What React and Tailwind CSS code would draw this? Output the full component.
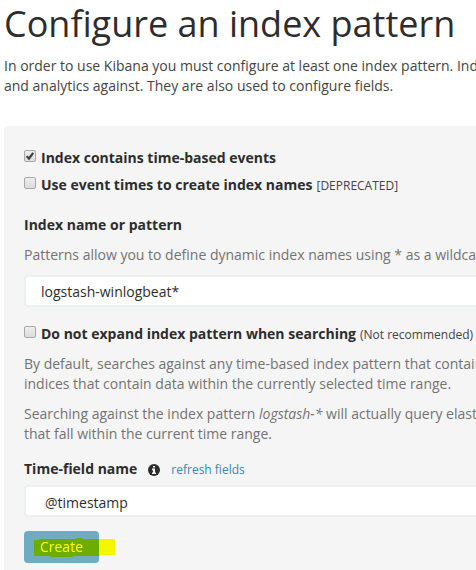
import React from "react";

function Tickbox({ id, label, note, noteClass, defaultChecked }) {
  return (
    <div className="flex h-5 items-center whitespace-nowrap">
      <span className="mr-[5px] grid h-5 shrink-0 items-start pt-0.5">
        <input
          id={id}
          type="checkbox"
          defaultChecked={defaultChecked}
          className="peer col-start-1 row-start-1 m-0 h-3 w-3 appearance-none rounded-[2px] border border-[#a9a9a9] bg-linear-to-b from-[#eeeeee] to-[#dcdcdc]"
        />
        <svg
          viewBox="0 0 12 12"
          className="pointer-events-none invisible col-start-1 row-start-1 h-3 w-3 peer-checked:visible"
          aria-hidden="true"
        >
          <path d="M2.6 6.2 L5 8.5 L9.2 2.8" fill="none" stroke="#404040" strokeWidth="2.2" />
        </svg>
      </span>
      <label htmlFor={id} className="flex items-baseline gap-1">
        <span className="font-bold">{label}</span>
        {note && <small className={noteClass}>{note}</small>}
      </label>
    </div>
  );
}

function InfoIcon() {
  return (
    <svg viewBox="0 0 12 12" className="h-3 w-3" aria-hidden="true">
      <circle cx="6" cy="6" r="6" fill="#2d2d2d" />
      <path d="M5 2h2v1.6H5z M4 4.600h3v3.800h1V10H4V8.400h1V6.200H4z" fill="#f5f5f5" />
    </svg>
  );
}

function Marker() {
  return (
    <svg
      viewBox="0 0 81 19"
      className="pointer-events-none absolute top-[7px] left-[10px] h-[19px] w-[81px] mix-blend-multiply"
      aria-hidden="true"
    >
      <path
        d="M0 2H5V1H42V0H48V1H81V17H66V18H39V19H16V18H0Z"
        fill="#ffff00"
        shapeRendering="crispEdges"
      />
    </svg>
  );
}

export default function App() {
  return (
    <main className="flex min-h-screen flex-col overflow-hidden bg-white pl-1 font-['Open_Sans','Noto_Sans',sans-serif] text-sm leading-5 text-[#2d2d2d]">
      <h1 className="pt-1 text-4xl leading-10 whitespace-nowrap">Configure an index pattern</h1>
      <p className="mt-3 whitespace-nowrap text-[#444444]">
        In order to use Kibana you must configure at least one index pattern. Ind
        <br />
        and analytics against. They are also used to configure fields.
      </p>

      <form
        className="mt-[30px] grow rounded-tl bg-[#f5f5f5] pt-[22px] pb-[7px] pl-5"
        onSubmit={(e) => e.preventDefault()}
      >
        <div className="flex flex-col gap-[7px]">
          <Tickbox id="time-based" label="Index contains time-based events" defaultChecked />
          <Tickbox
            id="event-times"
            label="Use event times to create index names"
            note="[DEPRECATED]"
            noteClass="text-xs text-[#444444]"
          />
        </div>

        <label htmlFor="index-name" className="mt-5 block font-bold">
          Index name or pattern
        </label>
        <p className="mt-[10px] whitespace-nowrap text-[#737373]">
          Patterns allow you to define dynamic index names using * as a wildca
        </p>
        <input
          id="index-name"
          type="text"
          defaultValue="logstash-winlogbeat*"
          className="mt-[10px] block h-8 w-full rounded-l border-2 border-r-0 border-[#ecf0f1] bg-white px-[15px]"
        />

        <div className="mt-[17px]">
          <Tickbox
            id="no-expand"
            label="Do not expand index pattern when searching"
            note="(Not recommended)"
            noteClass="text-xs text-[#444444]"
          />
        </div>
        <p className="mt-[10px] whitespace-nowrap text-[#737373]">
          By default, searches against any time-based index pattern that contain
          <br />
          indices that contain data within the currently selected time range.
        </p>
        <p className="mt-[10px] whitespace-nowrap text-[#737373]">
          Searching against the index pattern <i>logstash-*</i> will actually query elast
          <br />
          that fall within the current time range.
        </p>

        <div className="mt-[15px] flex items-baseline">
          <label htmlFor="time-field" className="font-bold">
            Time-field name
          </label>
          <span className="ml-[11px] self-center">
            <InfoIcon />
          </span>
          <a href="#refresh" className="ml-[11px] text-xs leading-5 text-[#328caa]">
            refresh fields
          </a>
        </div>
        <select
          id="time-field"
          className="mt-[5px] block h-8 w-full appearance-none rounded-l border-2 border-r-0 border-[#ecf0f1] bg-white px-[19px] pt-1"
        >
          <option>@timestamp</option>
        </select>

        <div className="relative isolate mt-[14px] bg-[#f5f5f5]">
          <button type="submit" className="block h-8 w-[75px] rounded bg-[#6eadc1] text-white">
            Create
          </button>
          <Marker />
        </div>
      </form>
    </main>
  );
}
